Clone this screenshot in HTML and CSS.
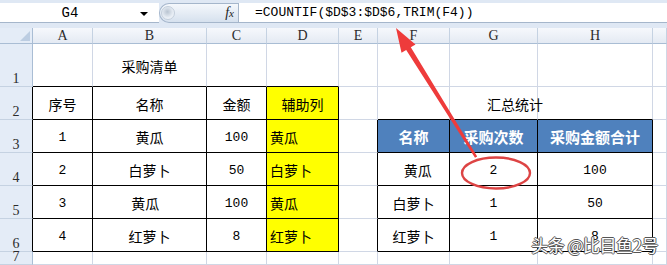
FILE: index.html
```html
<!DOCTYPE html>
<html lang="zh-CN">

<head>
    <meta charset="UTF-8">
    <meta name="viewport" content="width=device-width, initial-scale=1.0">
    <title>COUNTIF TRIM</title>
    <link rel="stylesheet" href="styles.css">
</head>

<body>
    <main class="app">
        <header class="formula-bar">
            <div class="name-box">
                <span class="cell-ref">G4</span>
                <span class="caret"></span>
            </div>
            <div class="fx-pill">
                <span class="knob"></span>
                <span class="fx">f<i>x</i></span>
            </div>
            <div class="formula">=COUNTIF($D$3:$D$6,TRIM(F4))</div>
        </header>

        <section class="sheet">
            <!-- column headers -->
            <div class="corner"></div>
            <div class="col-head">A</div>
            <div class="col-head">B</div>
            <div class="col-head">C</div>
            <div class="col-head">D</div>
            <div class="col-head">E</div>
            <div class="col-head">F</div>
            <div class="col-head">G</div>
            <div class="col-head">H</div>
            <div class="col-head"></div>

            <!-- row 1 -->
            <div class="row-head">1</div>
            <div class="cell k-b"></div>
            <div class="cell k-b">采购清单</div>
            <div class="cell k-b"></div>
            <div class="cell k-b"></div>
            <div class="cell"></div>
            <div class="cell"></div>
            <div class="cell"></div>
            <div class="cell"></div>
            <div class="cell"></div>

            <!-- row 2 -->
            <div class="row-head k-r">2</div>
            <div class="cell t">序号</div>
            <div class="cell t">名称</div>
            <div class="cell t">金额</div>
            <div class="cell t helper">辅助列</div>
            <div class="cell"></div>
            <div class="cell k-b"></div>
            <div class="cell k-b title"><span>汇总统计</span></div>
            <div class="cell k-b"></div>
            <div class="cell"></div>

            <!-- row 3 -->
            <div class="row-head k-r">3</div>
            <div class="cell t num">1</div>
            <div class="cell t">黄瓜</div>
            <div class="cell t num">100</div>
            <div class="cell t helper left">黄瓜</div>
            <div class="cell k-r"></div>
            <div class="cell t th">名称</div>
            <div class="cell t th">采购次数</div>
            <div class="cell t th">采购金额合计</div>
            <div class="cell"></div>

            <!-- row 4 -->
            <div class="row-head k-r">4</div>
            <div class="cell t num">2</div>
            <div class="cell t">白萝卜</div>
            <div class="cell t num">50</div>
            <div class="cell t helper left">白萝卜</div>
            <div class="cell k-r"></div>
            <div class="cell t"> 黄瓜</div>
            <div class="cell t num">2</div>
            <div class="cell t num">100</div>
            <div class="cell"></div>

            <!-- row 5 -->
            <div class="row-head k-r">5</div>
            <div class="cell t num">3</div>
            <div class="cell t">黄瓜 </div>
            <div class="cell t num">100</div>
            <div class="cell t helper left">黄瓜</div>
            <div class="cell k-r"></div>
            <div class="cell t">白萝卜</div>
            <div class="cell t num">1</div>
            <div class="cell t num">50</div>
            <div class="cell"></div>

            <!-- row 6 -->
            <div class="row-head k-r">6</div>
            <div class="cell t num">4</div>
            <div class="cell t">红萝卜</div>
            <div class="cell t num">8</div>
            <div class="cell t helper left">红萝卜</div>
            <div class="cell k-r"></div>
            <div class="cell t">红萝卜</div>
            <div class="cell t num">1</div>
            <div class="cell t num">8</div>
            <div class="cell"></div>

            <!-- row 7 -->
            <div class="row-head">7</div>
            <div class="cell"></div>
            <div class="cell"></div>
            <div class="cell"></div>
            <div class="cell"></div>
            <div class="cell"></div>
            <div class="cell"></div>
            <div class="cell"></div>
            <div class="cell"></div>
            <div class="cell"></div>
        </section>

        <!-- annotation drawn on top of the sheet -->
        <svg class="markup" width="667" height="265" viewBox="0 0 667 265">
            <polygon fill="#ee3b3b"
                points="396,28 415.5,44.5 410.8,47.3 477.2,156.6 475,157.8 406.2,49.9 401.5,52.8" />
            <ellipse cx="496" cy="173" rx="34" ry="15.5" fill="none" stroke="#dd4444" stroke-width="2.4" />
        </svg>

        <div class="watermark">头条 @比目鱼2号</div>
    </main>
</body>

</html>
```

FILE: styles.css
```css
*,
*::before,
*::after {
    box-sizing: border-box;
    margin: 0;
    padding: 0;
}

:root {
    --grid-line: #d0d7e5;
    --head-line: #a9bdd4;
    --head-bg: #e4ecf7;
    --frame: #a5b6cb;
}

body {
    background-color: #fff;
    font-family: 'Liberation Mono', 'Noto Sans CJK SC', monospace;
    color: #000;
}

.app {
    position: relative;
    width: 667px;
    height: 265px;
    overflow: hidden;
}

/* formula bar */

.formula-bar {
    display: flex;
    height: 28px;
    padding-top: 3px;
    padding-bottom: 5px;
    background-color: #dfe8f4;
}

.name-box {
    display: flex;
    align-items: center;
    width: 159px;
    background-color: #fff;
    border-bottom: 1px solid var(--frame);
}

.cell-ref {
    width: 140px;
    text-align: center;
    font-size: 14px;
}

.caret {
    width: 0;
    height: 0;
    margin-top: 2px;
    border-left: 4px solid transparent;
    border-right: 4px solid transparent;
    border-top: 4px solid #000;
}

.fx-pill {
    position: relative;
    display: flex;
    align-items: center;
    justify-content: space-between;
    width: 79px;
    padding: 0 4px 0 1px;
    border: 1px solid var(--frame);
    border-right: none;
    border-radius: 10px 0 0 10px;
    background: linear-gradient(#f5f8fc, #d6e1ee);
}

.knob {
    width: 14px;
    height: 14px;
    border-radius: 50%;
    background: radial-gradient(circle at 45% 40%, #b9c4d1 0, #e8eef5 60%, #f6f8fb 100%);
    border: 1px solid #c3cedb;
}

.fx {
    font-family: 'Liberation Serif', serif;
    font-style: italic;
    font-size: 14px;
    color: #222;
}

.fx i {
    font-size: 11px;
}

.formula {
    flex: 1;
    display: flex;
    align-items: center;
    padding-left: 16px;
    background-color: #fff;
    border-left: 1px solid var(--frame);
    border-bottom: 1px solid var(--frame);
    font-size: 13px;
    white-space: pre;
}

/* sheet */

.sheet {
    display: grid;
    grid-template-columns: 33px 60px 114px 60px 72px 39px 72px 88px 115px 14px;
    grid-template-rows: 16px 43px repeat(5, 33px) 13px;
    font-size: 14px;
}

.corner {
    position: relative;
    background-color: #e4ecf7;
    border-right: 1px solid var(--head-line);
    border-bottom: 1px solid var(--head-line);
}

.corner::after {
    content: '';
    position: absolute;
    right: 2px;
    bottom: 2px;
    border-left: 10px solid transparent;
    border-bottom: 10px solid #bccde2;
}

.col-head {
    display: flex;
    align-items: center;
    justify-content: center;
    background: linear-gradient(#f6f8fc, #e4eaf3);
    border-right: 1px solid #c5d2e2;
    border-bottom: 1px solid var(--head-line);
    font-family: 'Liberation Serif', serif;
    font-size: 14px;
    color: #2b2b2b;
}

.row-head {
    display: flex;
    align-items: flex-end;
    justify-content: center;
    background-color: var(--head-bg);
    border-right: 1px solid var(--head-line);
    border-bottom: 1px solid #c5d2e2;
    font-family: 'Liberation Serif', serif;
    font-size: 14px;
    line-height: 15px;
    color: #2b2b2b;
}

.cell {
    display: flex;
    align-items: center;
    justify-content: center;
    padding-top: 2px;
    border-right: 1px solid var(--grid-line);
    border-bottom: 1px solid var(--grid-line);
    white-space: pre;
}

.num {
    font-size: 13px;
}

.t {
    border-right-color: #000;
    border-bottom-color: #000;
}

.k-r {
    border-right-color: #000;
}

.k-b {
    border-bottom-color: #000;
}

.helper {
    background-color: #ff0;
}

.left {
    justify-content: flex-start;
    padding-left: 3px;
}

.title {
    justify-content: flex-start;
    padding-left: 37px;
    overflow: visible;
}

.th {
    background-color: #4f81bd;
    color: #fff;
    font-weight: bold;
    font-size: 15px;
}

/* annotation */

.markup {
    position: absolute;
    top: 0;
    left: 0;
    pointer-events: none;
}

.watermark {
    position: absolute;
    right: 9px;
    bottom: 10px;
    font-family: 'Noto Sans CJK SC', sans-serif;
    font-size: 17px;
    line-height: 20px;
    color: #fff;
    text-shadow: -1px 0 #555, 1px 0 #555, 0 -1px #555, 0 1px #555;
    letter-spacing: -0.5px;
}
```
